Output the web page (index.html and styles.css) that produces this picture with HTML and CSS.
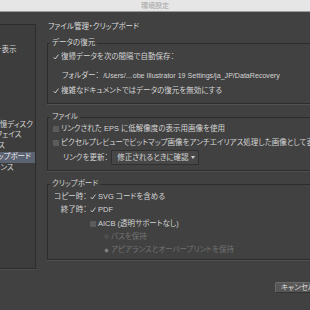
FILE: index.html
```html
<!DOCTYPE html>
<html lang="ja">

<head>
  <meta charset="UTF-8" />
  <meta name="viewport" content="width=device-width, initial-scale=1.0" />
  <title>環境設定</title>
  <link rel="stylesheet" href="styles.css">
</head>

<body>
  <div class="titlebar">環境設定</div>

  <div class="window">
    <ul class="sidebar">
      <li>一般</li>
      <li>選択範囲・アンカー表示</li>
      <li>テキスト</li>
      <li>単位</li>
      <li>ガイド・グリッド</li>
      <li>スマートガイド</li>
      <li>スライス</li>
      <li>ハイフネーション</li>
      <li>プラグイン・仮想記憶ディスク</li>
      <li>ユーザーインターフェイス</li>
      <li>GPU パフォーマンス</li>
      <li class="on">ファイル管理・クリップボード</li>
      <li>ブラックのアピアランス</li>
    </ul>

    <div class="pane">
      <h1>ファイル管理・クリップボード</h1>

      <fieldset class="recovery">
        <legend>データの復元</legend>
        <div class="row"><span class="check on"><svg viewBox="0 0 6 6"><polyline points="0.8,3.2 2.3,5 5.4,0.6" /></svg></span>復帰データを次の間隔で自動保存：</div>
        <div class="row folder">フォルダー：<span class="path">/Users/…obe Illustrator 19 Settings/ja_JP/DataRecovery</span></div>
        <div class="row last"><span class="check on"><svg viewBox="0 0 6 6"><polyline points="0.8,3.2 2.3,5 5.4,0.6" /></svg></span>複雑なドキュメントではデータの復元を無効にする</div>
      </fieldset>

      <fieldset class="files">
        <legend>ファイル</legend>
        <div class="row"><span class="check"></span>リンクされた EPS に低解像度の表示用画像を使用</div>
        <div class="row second"><span class="check"></span>ピクセルプレビューでビットマップ画像をアンチエイリアス処理した画像として表示</div>
        <div class="row links">リンクを更新：<span class="select">修正されるときに確認<i class="arrow"></i></span></div>
      </fieldset>

      <fieldset class="clipboard">
        <legend>クリップボード</legend>
        <div class="row"><span class="lbl">コピー時：</span><span class="check on"><svg viewBox="0 0 6 6"><polyline points="0.8,3.2 2.3,5 5.4,0.6" /></svg></span>SVG コードを含める</div>
        <div class="row"><span class="lbl">終了時：</span><span class="check on"><svg viewBox="0 0 6 6"><polyline points="0.8,3.2 2.3,5 5.4,0.6" /></svg></span>PDF</div>
        <div class="row aicb"><span class="check"></span>AICB (透明サポートなし)</div>
        <div class="row radio-row disabled"><span class="radio"></span>パスを保持</div>
        <div class="row radio-row disabled"><span class="radio on"></span>アピアランスとオーバープリントを保持</div>
      </fieldset>

      <div class="buttons">
        <button class="btn">キャンセル</button>
        <button class="btn">OK</button>
      </div>
    </div>
  </div>
</body>

</html>
```

FILE: styles.css
```css
html, body, div, ul, li, h1, fieldset, legend {
  padding: 0;
  margin: 0;
}
ul {
  list-style: none;
}
html, body {
  overflow: hidden;
}
body {
  width: 310px;
  height: 310px;
  background-color: #414141;
  color: #d4d4d4;
  font-family: "Liberation Sans", "Noto Sans CJK JP", sans-serif;
  font-size: 7.5px;
  font-feature-settings: "palt";
}

.titlebar {
  height: 11px;
  line-height: 11px;
  border-bottom: 1px solid #9c9c9c;
  background-color: #e6e6e6;
  color: #a4a4a4;
  font-size: 7px;
  text-align: center;
}

.window {
  display: flex;
  align-items: flex-start;
  padding-top: 10px;
}

/* left list, cut off by the window edge */
.sidebar {
  flex: none;
  box-sizing: border-box;
  width: 99px;
  height: 245px;
  margin: 2px 0 0 -63px;
  padding-top: 9.3px;
  border: 1px solid #2c2c2c;
  border-left: 0;
  background-color: #3d3d3d;
  box-shadow: 0 1px 0 #4e4e4e;
  overflow: hidden;
}
.sidebar li {
  height: 10.7px;
  line-height: 10.7px;
  padding-left: 3px;
  white-space: nowrap;
}
.sidebar li.on {
  background-color: #5b6272;
  color: #ececec;
}

.pane {
  flex: none;
  width: 334px;
  padding-left: 11px;
}
.pane h1 {
  height: 10px;
  line-height: 10px;
  margin-left: 1px;
  font-size: 7.5px;
  font-weight: normal;
  color: #dedede;
}

fieldset {
  border: 1px solid #2d2d2d;
  box-shadow: 0 1px 0 #515151;
  padding-left: 5px;
  margin-top: 8px;
  min-width: 0;
}
fieldset legend {
  height: 10px;
  line-height: 10px;
  padding: 0 2px;
  margin-left: -3px;
}

.row {
  display: flex;
  align-items: center;
  height: 10px;
  line-height: 10px;
  white-space: nowrap;
}

.recovery {
  margin-top: 6px;
  padding-top: 4px;
  padding-bottom: 7px;
}
.recovery .folder {
  margin-top: 9px;
  padding-left: 9px;
}
.recovery .last {
  margin-top: 5px;
}
.path {
  margin-left: 4px;
  font-size: 7.1px;
}

.files {
  padding-top: 2px;
  padding-bottom: 5px;
}
.files .second {
  margin-top: 4px;
}
.files .links {
  height: 15px;
  margin-top: 2px;
  padding-left: 10px;
}
.select {
  display: inline-flex;
  align-items: center;
  box-sizing: border-box;
  width: 88px;
  height: 15px;
  margin-left: 3px;
  padding: 0 3px 0 5px;
  border: 1px solid #303030;
  border-radius: 1px;
  background-color: #474747;
}
.select .arrow {
  width: 0;
  height: 0;
  margin-left: auto;
  border-top: 3px solid #cfcfcf;
  border-left: 2px solid transparent;
  border-right: 2px solid transparent;
}

.clipboard {
  padding-top: 3px;
  padding-bottom: 4px;
}
.clipboard .row + .row {
  margin-top: 3.3px;
}
.clipboard .lbl {
  width: 34px;
  margin-right: 3px;
  text-align: right;
}
.clipboard .aicb {
  padding-left: 37px;
}
.clipboard .radio-row {
  padding-left: 51px;
}

.check {
  flex: none;
  width: 6px;
  height: 6px;
  margin-right: 2px;
  background-color: #5b5b5b;
}
.check.on {
  background-color: transparent;
}
.check svg {
  display: block;
  width: 6px;
  height: 6px;
  fill: none;
  stroke: #d6d6d6;
  stroke-width: 0.9;
}

.radio {
  flex: none;
  box-sizing: border-box;
  width: 5px;
  height: 5px;
  margin-right: 2px;
  border-radius: 50%;
  background-color: #4c4c4c;
}
.radio.on {
  border: 1.5px solid #4c4c4c;
  background-color: #8a8a8a;
}
.disabled {
  color: #727272;
}

.buttons {
  display: flex;
  gap: 8px;
  margin-top: 22px;
  padding-left: 228px;
}
.btn {
  height: 11px;
  padding: 0 5px;
  border: 1px solid #6a6a6a;
  border-bottom-color: #333;
  border-radius: 2px;
  background-color: #575757;
  color: #dcdcdc;
  font-family: inherit;
  font-size: 7.5px;
  line-height: 9px;
  font-feature-settings: "palt";
}
```
